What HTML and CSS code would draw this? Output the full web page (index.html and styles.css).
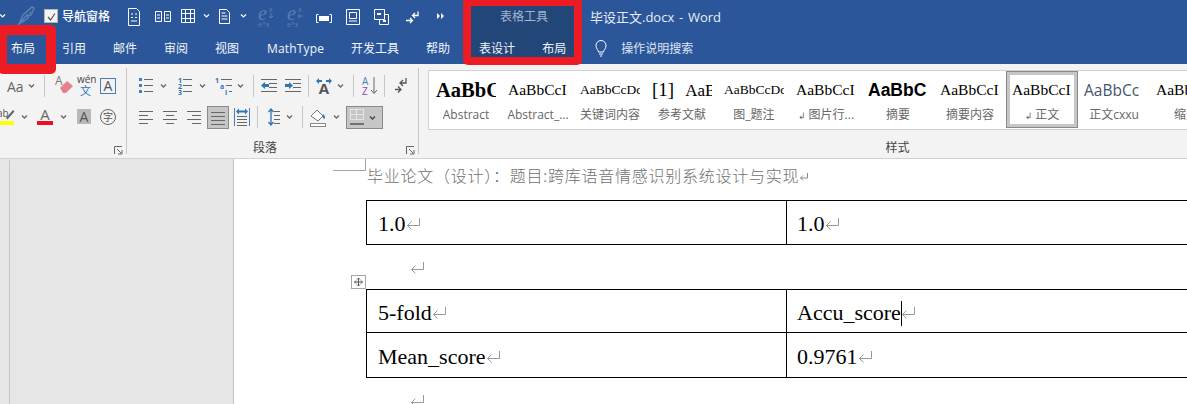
FILE: index.html
```html
<!DOCTYPE html>
<html lang="zh-CN">
<head>
  <meta charset="UTF-8">
  <title>毕设正文.docx - Word</title>
  <link rel="stylesheet" href="styles.css">
</head>
<body>
  <svg class="defs" width="0" height="0">
    <symbol id="caret" width="11" height="24"><path d="M3 10.5l2.5 2.5L8 10.5" fill="none" stroke="currentColor" stroke-width="1.3"/></symbol>
    <symbol id="ret" width="14" height="13"><path d="M13.5 1v7.5H1.5M5.5 4.5l-4 4 4 4" fill="none" stroke="currentColor"/></symbol>
  </svg>

  <header class="header">
    <div class="mark mark-tab"></div>
    <div class="mark mark-tools"></div>

    <div class="title-row">
      <svg width="8" height="32"><path d="M0 14.5l2.5 2.5L5 14.5" fill="none" stroke="#fff" stroke-width="1.2"/></svg>
      <svg width="32" height="32"><path d="M11 24l4-9 9-8 2 1-2 5-2 0 1 2-3 1v2l-4 3zM10 25l10-11" fill="none" stroke="#5b7eb4" stroke-width="1.5"/></svg>
      <span class="check"><svg width="13" height="13"><path d="M3 7l2.5 3L10 3.500" fill="none" stroke="#555" stroke-width="1.2"/></svg></span>
      <span class="qat-label">导航窗格</span>
      <svg width="36" height="32"><path d="M16.500 8.500h8l3 3v14h-11zM19 14h2M23 14h2M19 17.500h2M23 17.500h2M19 21h6" fill="none" stroke="#fff"/></svg>
      <svg width="28" height="32"><path d="M7.500 11.500h6v10h-6zM16.500 11.500h6v10h-6zM9 15h3M9 18h3M18 15h3M18 18h3" fill="none" stroke="#fff"/></svg>
      <svg width="25" height="32"><path d="M5.500 9.500h13v13h-13zM9.500 9.500v13M14.500 9.500v13M5.500 13.500h13M5.500 18.500h13" fill="none" stroke="#fff"/></svg>
      <svg width="11" height="32"><path d="M3 14.500l2.500 2.500L8 14.500" fill="none" stroke="#fff" stroke-width="1.200"/></svg>
      <svg width="26" height="32"><path d="M7.500 9.500h7l3 3v11h-10zM9.500 13h4M9.500 16h6M9.500 19h6" fill="none" stroke="#fff"/></svg>
      <svg width="11" height="32"><path d="M3 14.500l2.500 2.500L8 14.500" fill="none" stroke="#fff" stroke-width="1.200"/></svg>
      <svg width="32" height="32" class="dim"><text x="9" y="20" class="ex">e</text><text x="20" y="12" class="ex-sm">x</text><path d="M22 13v5M20 16l2 2 2-2" fill="none" stroke="#5b7eb4"/><text x="9" y="27" class="ex-sm">e^x</text></svg>
      <svg width="29" height="32" class="dim"><text x="6" y="20" class="ex">e</text><text x="17" y="12" class="ex-sm">x</text><path d="M22 16h-4M19 14l-2 2 2 2" fill="none" stroke="#5b7eb4"/><text x="6" y="27" class="ex-sm">e^x</text></svg>
      <svg width="28" height="32"><path d="M8.500 14.500h-2v8h2M19.500 14.500h2v8h-2" fill="none" stroke="#fff"/><rect x="9" y="16" width="10" height="5" fill="#fff"/></svg>
      <svg width="28" height="32"><path d="M8.500 9.500h13v15h-13zM11.500 12.500h7v6h-7zM11 21h8" fill="none" stroke="#fff"/></svg>
      <svg width="32" height="32"><path d="M8.500 9.500h10v10h-10zM18.500 14.500h4v10h-9v-5" fill="none" stroke="#fff"/><rect x="11" y="13" width="4" height="2" fill="#fff"/><rect x="17" y="20" width="3" height="2" fill="#fff"/></svg>
      <svg width="29" height="32"><path d="M20 11.500v4h-5M17 13l-2.500 2.500L17 18M8 20.500h6M12 18l2.500 2.500L12 23" fill="none" stroke="#fff" stroke-width="1.300"/></svg>
      <svg width="38" height="32"><path d="M10 13v6l3-3zM14 13v6l3-3z" fill="#fff"/></svg>
      <span class="ctx-title">表格工具</span>
      <span class="doc-title">毕设正文.docx&nbsp; - &nbsp;Word</span>
    </div>

    <nav class="tab-row">
      <span class="tab">布局</span>
      <span class="tab">引用</span>
      <span class="tab">邮件</span>
      <span class="tab">审阅</span>
      <span class="tab">视图</span>
      <span class="tab tab-latin">MathType</span>
      <span class="tab">开发工具</span>
      <span class="tab">帮助</span>
      <span class="tab tab-ctx">表设计</span>
      <span class="tab">布局</span>
      <svg class="bulb" width="14" height="18"><path d="M4.500 13c0-2-2.500-3-2.500-6.500a5 5 0 0 1 10 0C12 10 9.500 11 9.500 13zM5 15h4M6 17h2" fill="none" stroke="#fff"/></svg>
      <span class="tell">操作说明搜索</span>
    </nav>
  </header>

  <section class="ribbon">
    <div class="group group-font">
      <div class="tool-row">
        <span class="aa">Aa</span>
        <svg class="grey" width="11" height="24"><use href="#caret"/></svg>
        <span class="sep sep-7"></span>
        <svg width="23" height="24"><path d="M6 14l7-7 6 5-7 7h-3z" fill="#e8808f"/><text x="1" y="11" class="ic-a" font-size="12" fill="#777">A</text></svg>
        <svg width="23" height="24"><text x="0" y="9" class="ic-wen">wén</text><text x="3" y="21" class="ic-wen-zh">文</text></svg>
        <svg width="17" height="24"><rect x=".5" y="4.500" width="15" height="15" fill="none" stroke="#4a7ebb"/><text x="8" y="17" text-anchor="middle" class="ic-a" font-size="14" fill="#555">A</text></svg>
      </div>
      <div class="tool-row">
        <svg width="19" height="24"><text x="-3" y="12" font-size="10" class="ic-a" fill="#555">ab</text><path d="M6 13l7-8 1.500 1.500-7 8z" fill="#666"/><rect y="16" width="14" height="4" fill="#ff0"/></svg>
        <svg class="grey" width="11" height="24"><use href="#caret"/></svg>
        <svg width="28" height="24"><text x="15" y="15" text-anchor="middle" class="ic-a" font-size="15" fill="#666">A</text><rect x="7" y="16" width="16" height="4" fill="#e81123"/></svg>
        <svg class="grey" width="11" height="24"><use href="#caret"/></svg>
        <svg width="28" height="24"><rect x="8" y="4" width="14" height="15" fill="#b8b8b8"/><text x="15" y="17" text-anchor="middle" class="ic-a" font-size="14" fill="#555">A</text></svg>
        <svg width="22" height="24"><circle cx="11" cy="12" r="7.500" fill="none" stroke="#666"/><text x="11" y="15.500" text-anchor="middle" class="ic-zi">字</text></svg>
      </div>
      <div class="grp-foot">
        <span></span>
        <svg class="launcher" width="9" height="9"><path d="M.5 8V.5H8M3 3l4.500 4.500M4 8h4V4" fill="none" stroke="#666"/></svg>
      </div>
    </div>

    <div class="group group-para">
      <div class="tool-row">
        <svg width="31" height="24"><path d="M12 4h3v3h-3zM12 10h3v3h-3zM12 16h3v3h-3z" fill="#4a7ebb"/><path d="M17 5.500h9M17 11.500h9M17 17.500h9" stroke="#666"/></svg>
        <svg class="grey" width="12" height="24"><use href="#caret"/></svg>
        <svg width="27" height="24"><text x="8" y="9" class="ic-num">1</text><text x="8" y="15" class="ic-num">2</text><text x="8" y="21" class="ic-num">3</text><path d="M13 5.500h9M13 11.500h9M13 17.500h9" stroke="#666"/></svg>
        <svg class="grey" width="12" height="24"><use href="#caret"/></svg>
        <svg width="26" height="24"><text x="6" y="9" class="ic-num">1</text><text x="11" y="15" class="ic-num">a</text><text x="16" y="21" class="ic-num">i</text><path d="M12 5.500h11M17 11.500h6M20 17.500h3" stroke="#666"/></svg>
        <svg class="grey" width="11" height="24"><use href="#caret"/></svg>
        <span class="sep sep-7"></span>
        <svg width="27" height="24"><path d="M7 5.500h16M15 9.500h8M15 13.500h8M7 17.500h16" stroke="#666"/><path d="M7 11.500l4-3.500v2h4v3h-4v2z" fill="#2e75b6"/></svg>
        <svg width="24" height="24"><path d="M4 5.500h16M12 9.500h8M12 13.500h8M4 17.500h16" stroke="#666"/><path d="M12 11.500l-4-3.500v2H4v3h4v2z" fill="#2e75b6"/></svg>
        <span class="sep sep-3"></span>
        <svg width="26" height="24"><text x="15" y="20" text-anchor="middle" class="ic-a" font-size="15" font-weight="700" fill="#555">A</text><path d="M7 7l3-3v2h3v2h-3v2zM23 7l-3-3v2h-3v2h3v2z" fill="#2e75b6"/></svg>
        <svg class="grey" width="11" height="24"><use href="#caret"/></svg>
        <span class="sep sep-7"></span>
        <svg width="26" height="24"><text x="8" y="11" font-size="10" class="ic-a" fill="#4a7ebb">A</text><text x="8" y="21" font-size="10" class="ic-a" fill="#8a4bb0">Z</text><path d="M20 3v16M17 16l3 3.500 3-3.500" fill="none" stroke="#666"/></svg>
        <span class="sep sep-4"></span>
        <svg width="25" height="24"><path d="M21 4v5h-6M18 6l-3 3 3 3" fill="none" stroke="#555" stroke-width="1.300"/><path d="M10 15.500h6M13 12.500l3 3-3 3" fill="none" stroke="#555" stroke-width="1.300"/></svg>
      </div>
      <div class="tool-row">
        <svg width="31" height="24"><path d="M12 6.500h14M12 10.500h9M12 14.500h14M12 18.500h9" stroke="#666"/></svg>
        <svg width="24" height="24"><path d="M5 6.500h14M8 10.500h8M5 14.500h14M8 18.500h8" stroke="#666"/></svg>
        <svg width="25" height="24"><path d="M5 6.500h14M10 10.500h9M5 14.500h14M10 18.500h9" stroke="#666"/></svg>
        <span class="pressed press-just"><svg width="20" height="21"><path d="M3 5.500h14M3 9.500h14M3 13.500h14M3 17.500h14" stroke="#666"/></svg></span>
        <svg width="25" height="24"><path d="M5.500 3v18M20.500 3v18" stroke="#4a7ebb"/><path d="M8 11.500h10M8 14.500h10M8 17.500h10M8 20.500h10" stroke="#666"/><path d="M7 6.500l3-3v2h6v-2l3 3-3 3v-2h-6v2z" fill="#2e75b6"/></svg>
        <span class="sep sep-3"></span>
        <svg width="26" height="24"><path d="M13 4v16M10.500 7L13 4l2.500 3M10.500 17l2.500 3 2.500-3" fill="none" stroke="#2e75b6" stroke-width="1.300"/><path d="M16 6.500h6M16 10.500h6M16 14.500h6M16 18.500h6" stroke="#666"/></svg>
        <svg class="grey" width="11" height="24"><use href="#caret"/></svg>
        <span class="sep sep-7"></span>
        <svg width="28" height="24"><path d="M8 11l6-6 6 6-5 5z" fill="#fff" stroke="#777"/><path d="M20 9c2 2 3 4 1 5-1-1-2-3-1-5z" fill="#2e75b6"/><rect x="7.500" y="18.500" width="15" height="3" fill="#fff" stroke="#888"/></svg>
        <svg class="grey" width="11" height="24"><use href="#caret"/></svg>
        <span class="pressed press-border">
          <svg width="14" height="16"><path d="M.5.500h13M.5 5.500h13M.5 10.500h13M.5 .5v10M6.500 .5v10M13.500 .5v10" fill="none" stroke="#fff" stroke-dasharray="1 1"/><path d="M0 15h14" stroke="#555" stroke-width="1.500"/></svg>
          <svg class="caret-dark" width="11" height="21"><use href="#caret" y="-1"/></svg>
        </span>
      </div>
      <div class="grp-foot">
        <span class="grp-label">段落</span>
        <svg class="launcher" width="9" height="9"><path d="M.5 8V.5H8M3 3l4.500 4.500M4 8h4V4" fill="none" stroke="#666"/></svg>
      </div>
    </div>

    <div class="group group-styles">
      <div class="gallery">
        <div class="style-card"><div class="prev prev-abstract">AaBbCcDd</div><div class="style-name">Abstract</div></div>
        <div class="style-card"><div class="prev">AaBbCcI</div><div class="style-name">Abstract_...</div></div>
        <div class="style-card"><div class="prev prev-small">AaBbCcDd</div><div class="style-name">关键词内容</div></div>
        <div class="style-card"><div class="prev prev-ref"><span class="ref-no">[1]</span>AaBb</div><div class="style-name">参考文献</div></div>
        <div class="style-card"><div class="prev prev-small">AaBbCcDd</div><div class="style-name">图_题注</div></div>
        <div class="style-card"><div class="prev">AaBbCcI</div><div class="style-name"><span class="para-mark">↲</span> 图片行...</div></div>
        <div class="style-card"><div class="prev prev-heavy">AaBbC</div><div class="style-name">摘要</div></div>
        <div class="style-card"><div class="prev">AaBbCcI</div><div class="style-name">摘要内容</div></div>
        <div class="style-card is-selected"><div class="prev">AaBbCcI</div><div class="style-name"><span class="para-mark">↲</span> 正文</div></div>
        <div class="style-card"><div class="prev prev-sans">AaBbCc</div><div class="style-name">正文cxxu</div></div>
        <div class="style-card"><div class="prev">AaBbCcI</div><div class="style-name">缩进</div></div>
      </div>
      <div class="grp-foot grp-foot-center"><span class="grp-label">样式</span></div>
    </div>
  </section>

  <main class="doc">
    <div class="nav-strip"></div>
    <div class="desk"></div>
    <div class="page">
      <div class="crop-mark"></div>
      <svg class="table-handle" width="15" height="14"><rect x=".5" y=".5" width="14" height="13" fill="#fff" stroke="#a6a6a6"/><path d="M7.500 3v8M3.500 7h8M6 4.500L7.500 3 9 4.500M6 9.500L7.500 11 9 9.500M5 5.500L3.500 7 5 8.500M10 5.500L11.500 7 10 8.500" fill="none" stroke="#555"/></svg>

      <div class="page-header">毕业论文（设计）：题目:跨库语音情感识别系统设计与实现<svg class="ret-small" width="10" height="10"><path d="M8.500 1v5H1.500M4 3.500L1.500 6 4 8.500" fill="none" stroke="#888"/></svg></div>

      <table class="word-table first-table">
        <tr>
          <td class="col-a">1.0<svg class="ret" width="14" height="13"><use href="#ret"/></svg></td>
          <td class="col-b">1.0<svg class="ret" width="14" height="13"><use href="#ret"/></svg></td>
        </tr>
      </table>

      <div class="empty-para"><svg class="ret" width="14" height="13"><use href="#ret"/></svg></div>

      <table class="word-table">
        <tr class="row-short">
          <td class="col-a">5-fold<svg class="ret" width="14" height="13"><use href="#ret"/></svg></td>
          <td class="col-b">Accu_score<span class="cursor"></span><svg class="ret ret-cursor" width="14" height="13"><use href="#ret"/></svg></td>
        </tr>
        <tr class="row-tall">
          <td class="col-a">Mean_score<svg class="ret" width="14" height="13"><use href="#ret"/></svg></td>
          <td class="col-b">0.9761<svg class="ret" width="14" height="13"><use href="#ret"/></svg></td>
        </tr>
      </table>

      <div class="empty-para"><svg class="ret" width="14" height="13"><use href="#ret"/></svg></div>
    </div>
  </main>
</body>
</html>
```

FILE: styles.css
```css
* {
  box-sizing: border-box;
}

html, body {
  margin: 0;
  padding: 0;
  height: 404px;
  overflow: hidden;
}

body {
  font-family: "Open Sans", "Noto Sans CJK SC", sans-serif;
  font-size: 12px;
  background: #fff;
  color: #444;
}

svg {
  display: block;
  flex: none;
}

.defs {
  position: absolute;
}

/* blue title + tab area */
.header {
  position: relative;
  height: 64px;
  background: #2b579a;
  color: #fff;
}

.title-row,
.tab-row {
  position: relative;
  z-index: 1;
  display: flex;
  align-items: center;
  height: 32px;
  white-space: nowrap;
}

.mark {
  position: absolute;
  border: 8px solid #ed1c24;
  border-radius: 5px;
}

.mark-tab {
  left: -2px;
  top: 25px;
  width: 58px;
  height: 49px;
  border-width: 10px 10px 10px 9px;
  z-index: 2;
  pointer-events: none;
}

.mark-tools {
  left: 463px;
  top: -2px;
  width: 119px;
  height: 67px;
  background: #234679;
}

.check {
  display: flex;
  width: 14px;
  height: 14px;
  margin: 0 4px;
  background: #f4f4f4;
  border: 1px solid #b5b5b5;
}

.qat-label {
  width: 50px;
  font-weight: 500;
}

.dim text {
  fill: #5b7eb4;
}

.ex {
  font-family: "Liberation Serif", serif;
  font-style: italic;
  font-size: 20px;
}

.ex-sm {
  font-size: 7px;
}

.ctx-title {
  margin-left: 35px;
  width: 48px;
  color: #a3b5d0;
}

.doc-title {
  margin-left: 42px;
  color: #e8edf5;
  font-size: 13px;
  word-spacing: -1px;
}

.tab-row {
  gap: 27px;
  padding-left: 11px;
}

.tab {
  color: #f2f5fa;
}

.tab-latin {
  margin-left: 1px;
  letter-spacing: .15px;
}

.tab-ctx {
  margin-left: 2px;
}

.bulb {
  margin-left: 1px;
}

.tell {
  margin-left: -14px;
  color: #dfe6f1;
}

/* ribbon */
.ribbon {
  display: flex;
  height: 95px;
  background: #f3f3f3;
  border-bottom: 1px solid #d2d2d2;
}

.group {
  display: flex;
  flex-direction: column;
  flex: none;
  height: 86px;
  margin-top: 4px;
  padding-top: 6px;
  border-right: 1px solid #c6c6c6;
}

.group-font {
  width: 127px;
}

.group-para {
  width: 292px;
}

.group-styles {
  width: 951px;
  padding: 2px 0 0 9px;
  border-right: 0;
}

.tool-row {
  display: flex;
  align-items: center;
  height: 24px;
  margin-bottom: 7px;
}

.grey {
  color: #666;
}

.aa {
  width: 26px;
  padding-left: 7px;
  font-size: 14px;
  color: #666;
}

.sep {
  flex: none;
  width: 1px;
  height: 22px;
  background: #c6c6c6;
}

.sep-3 { margin-left: 3px; }
.sep-4 { margin-left: 4px; }
.sep-7 { margin-left: 7px; }

.group-font .sep {
  margin-right: 9px;
}

.ic-a {
  font-family: "Open Sans", sans-serif;
}

.ic-wen {
  font-size: 10px;
  fill: #444;
}

.ic-wen-zh {
  font-family: "Noto Sans CJK SC", sans-serif;
  font-size: 11px;
  fill: #2e75b6;
}

.ic-zi {
  font-family: "Noto Sans CJK SC", sans-serif;
  font-size: 10px;
  fill: #555;
}

.ic-num {
  font-size: 7px;
  font-weight: 700;
  fill: #2e75b6;
}

.pressed {
  display: flex;
  align-items: center;
  flex: none;
  height: 23px;
  background: #c6c6c6;
  border: 1px solid #8a8a8a;
}

.press-just {
  width: 22px;
}

.press-border {
  width: 37px;
  margin-left: 4px;
  padding-left: 3px;
}

.caret-dark {
  margin-left: 3px;
  color: #444;
}

.grp-foot {
  display: flex;
  align-items: flex-end;
  justify-content: space-between;
  height: 17px;
  margin-top: auto;
  margin-bottom: -2px;
  padding-right: 3px;
}

.group-para .grp-foot {
  padding-left: 126px;
}

.grp-foot-center {
  justify-content: center;
}

.grp-label {
  line-height: 17px;
  color: #444;
}

.launcher {
  margin-bottom: 1px;
}

/* style gallery */
.gallery {
  display: flex;
  height: 60px;
  padding-left: 1px;
  background: #fff;
  border: 1px solid #d2d2d2;
  border-right: 0;
}

.style-card {
  flex: none;
  width: 72px;
  height: 57px;
  padding-top: 6px;
  text-align: center;
}

.is-selected {
  box-shadow: inset 0 0 0 1px #8a8a8a, inset 0 0 0 4px #c6c6c6;
}

.prev {
  width: 60px;
  height: 26px;
  margin: 0 auto;
  overflow: hidden;
  font-family: "Liberation Serif", serif;
  font-size: 15.5px;
  line-height: 26px;
  color: #000;
  text-align: left;
  white-space: nowrap;
}

.prev-abstract {
  font-size: 20.5px;
  font-weight: 700;
}

.prev-small {
  font-size: 13.5px;
}

.prev-ref {
  font-size: 17px;
}

.ref-no {
  margin-right: 11px;
  font-size: 19px;
}

.prev-heavy {
  font-family: "Liberation Sans", sans-serif;
  font-size: 17.5px;
  font-weight: 700;
}

.prev-sans {
  font-family: "Open Sans", sans-serif;
  font-size: 15.5px;
  color: #44546a;
}

.style-name {
  margin-top: 4px;
  line-height: 16px;
  color: #666;
  white-space: nowrap;
}

.para-mark {
  font-family: "DejaVu Sans", sans-serif;
  font-size: 9px;
}

/* document */
.doc {
  display: flex;
  height: 245px;
}

.nav-strip {
  flex: none;
  width: 10px;
  background: #e6e6e6;
  border-right: 1px solid #c6c6c6;
  border-top: 2px solid #e6e6e6;
}

.desk {
  flex: none;
  width: 224px;
  background: #e6e6e6;
  border-right: 1px solid #c6c6c6;
}

.page {
  position: relative;
  flex: 1;
  min-width: 0;
  padding: 6px 0 0 132px;
  overflow: hidden;
  background: #fff;
}

.crop-mark {
  position: absolute;
  left: 99px;
  top: 0;
  width: 33px;
  height: 12px;
  border-right: 1px solid #a6a6a6;
  border-bottom: 1px solid #a6a6a6;
}

.table-handle {
  position: absolute;
  left: 117px;
  top: 116px;
}

.page-header {
  display: flex;
  align-items: center;
  height: 20px;
  padding-left: 1px;
  font-family: "Noto Sans CJK SC", sans-serif;
  font-size: 16px;
  font-weight: 300;
  letter-spacing: .75px;
  color: #707070;
  white-space: nowrap;
}

.ret-small {
  margin-top: 3px;
}

.word-table {
  width: 1000px;
  border-collapse: collapse;
  font-family: "Liberation Serif", serif;
  font-size: 22px;
  color: #000;
}

.first-table {
  margin-top: 15px;
}

.word-table td {
  height: 44px;
  padding: 3px 0 0 11px;
  border: 1px solid #000;
  white-space: nowrap;
}

.row-short td {
  height: 43px;
}

.row-tall td {
  height: 45px;
}

.word-table .col-a {
  width: 420px;
}

.word-table .col-b {
  padding-left: 10px;
}

.ret {
  display: inline-block;
  vertical-align: 1px;
  color: #999;
}

.ret-cursor {
  margin-left: -1px;
}

.cursor {
  display: inline-block;
  width: 1px;
  height: 25px;
  margin-bottom: -6px;
  background: #000;
}

.empty-para {
  display: flex;
  align-items: center;
  height: 44px;
  padding-left: 44px;
  color: #999;
}
```
